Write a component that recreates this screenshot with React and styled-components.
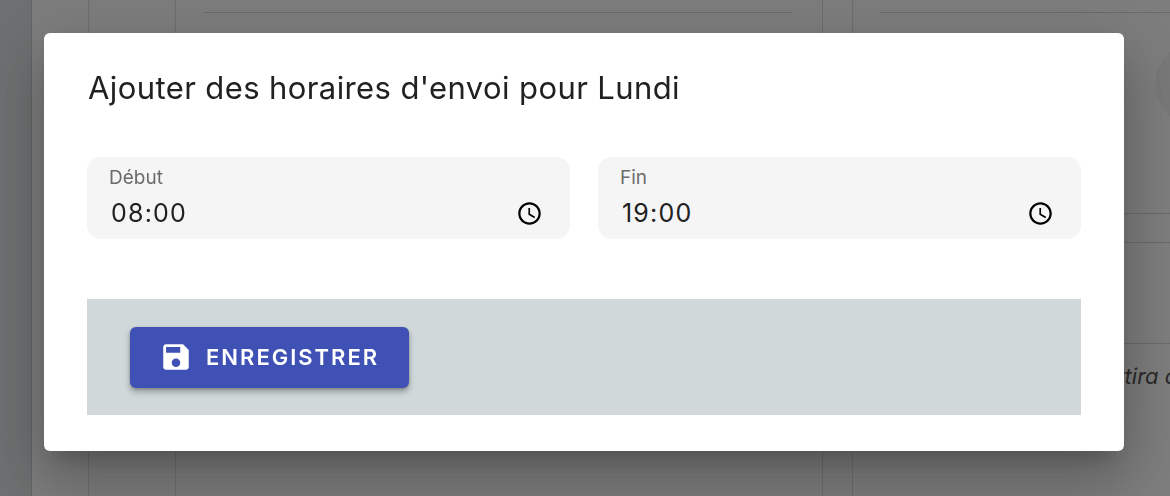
import React from 'react';
import styled, { createGlobalStyle } from 'styled-components';

const GlobalStyle = createGlobalStyle`
  html, body {
    margin: 0;
    padding: 0;
    height: 100%;
    overflow: hidden;
    font-family: Inter, "Liberation Sans", sans-serif;
  }
`;

// page behind the dialog
const Page = styled.div`
  display: flex;
  width: 1170px;
  height: 496px;
  background: #fafafa;
  overflow: hidden;
`;

const Rail = styled.div`
  width: 31px;
  background: #dcdfe1;
  border-right: 1px solid #c8c8c8;
`;

const Column = styled.div`
  width: ${(p) => p.$width}px;
  border-right: 1px solid #dcdcdc;
  flex-shrink: 0;
`;

const MainColumn = styled.div`
  width: 647px;
  flex-shrink: 0;
  padding: 12px 29px 0 28px;
  box-sizing: border-box;
  border-right: 1px solid #dcdcdc;
`;

const Gutter = styled.div`
  width: 29px;
  border-right: 1px solid #dcdcdc;
  flex-shrink: 0;
`;

const SideColumn = styled.div`
  flex: 1;
  min-width: 0;
  padding: 12px 0 0 27px;
  display: flex;
  flex-direction: column;
  overflow: hidden;
`;

const Rule = styled.div`
  height: 1px;
  flex-shrink: 0;
  background: #d4d4d4;
  margin-top: ${(p) => p.$top || 0}px;
`;

const Avatar = styled.div`
  width: 84px;
  height: 84px;
  flex-shrink: 0;
  margin: 29px 0 0 275px;
  border-radius: 50%;
  background: #f1f1f1;
`;

const Note = styled.div`
  margin-top: 18px;
  padding-left: 209px;
  font-size: 22px;
  line-height: 28px;
  font-style: italic;
  color: #555;
  white-space: nowrap;
`;

const Backdrop = styled.div`
  position: fixed;
  inset: 0;
  background: rgba(0, 0, 0, 0.5);
  padding: 33px 0 0 44px;
  box-sizing: border-box;
`;

const Dialog = styled.div`
  width: 1080px;
  height: 418px;
  box-sizing: border-box;
  padding: 38px 43px 36px;
  background: #fff;
  border-radius: 6px;
  box-shadow: 0 15px 21px -10px rgba(0, 0, 0, 0.2),
    0 34px 53px 4px rgba(0, 0, 0, 0.14), 0 13px 64px 11px rgba(0, 0, 0, 0.12);
`;

const Title = styled.h2`
  margin: 0 0 0 1px;
  font-size: 31px;
  line-height: 34px;
  font-weight: 400;
  letter-spacing: 0.4px;
  color: #212121;
`;

const Fields = styled.div`
  display: grid;
  grid-template-columns: 483px 483px;
  gap: 28px;
  margin-top: 52px;
`;

const Field = styled.div`
  height: 82px;
  box-sizing: border-box;
  padding: 10px 27px 0 22px;
  background: #f5f5f5;
  border-radius: 14px;
`;

const Label = styled.div`
  font-size: 19px;
  line-height: 22px;
  color: #6b6b6b;
`;

const ValueRow = styled.div`
  display: flex;
  align-items: center;
  justify-content: space-between;
  margin-top: 4px;
  padding-left: 2px;
`;

const Value = styled.span`
  font-size: 25px;
  line-height: 40px;
  letter-spacing: 1.2px;
  color: #212121;
`;

const Footer = styled.div`
  height: 116px;
  box-sizing: border-box;
  margin-top: 60px;
  padding: 28px 43px;
  background: #d0d8da;
`;

const SaveButton = styled.button`
  display: flex;
  align-items: center;
  gap: 13px;
  width: 279px;
  height: 61px;
  padding: 0 0 1px 29px;
  box-sizing: border-box;
  border: 0;
  border-radius: 6px;
  background: #3f51b5;
  color: #fff;
  font-family: inherit;
  font-size: 22px;
  font-weight: 600;
  letter-spacing: 2px;
  box-shadow: 0 4px 6px rgba(0, 0, 0, 0.28), 0 1px 3px rgba(0, 0, 0, 0.2);
`;

const ClockIcon = () => (
  <svg width="27" height="27" viewBox="0 0 24 24" fill="#000">
    <path d="M11.99 2C6.47 2 2 6.48 2 12s4.47 10 9.99 10C17.52 22 22 17.52 22 12S17.52 2 11.99 2zM12 20c-4.42 0-8-3.58-8-8s3.58-8 8-8 8 3.58 8 8-3.58 8-8 8z" />
    <path d="M12.5 7H11v6l5.25 3.15.75-1.23-4.5-2.67z" />
  </svg>
);

const SaveIcon = () => (
  <svg width="34" height="34" viewBox="0 0 24 24" fill="#fff">
    <path d="M17 3H5c-1.11 0-2 .9-2 2v14c0 1.1.89 2 2 2h14c1.1 0 2-.9 2-2V7l-4-4zm-5 16c-1.66 0-3-1.34-3-3s1.34-3 3-3 3 1.34 3 3-1.34 3-3 3zm3-10H5V5h10v4z" />
  </svg>
);

const TimeField = ({ label, value }) => (
  <Field>
    <Label>{label}</Label>
    <ValueRow>
      <Value>{value}</Value>
      <ClockIcon />
    </ValueRow>
  </Field>
);

export default function App() {
  return (
    <>
      <GlobalStyle />
      <Page>
        <Rail />
        <Column $width={56} />
        <Column $width={86} />
        <MainColumn>
          <Rule />
        </MainColumn>
        <Gutter />
        <SideColumn>
          <Rule />
          <Avatar />
          <Rule $top={87} />
          <Rule $top={28} />
          <Rule $top={100} />
          <Note>partira à</Note>
        </SideColumn>
      </Page>
      <Backdrop>
        <Dialog>
          <Title>Ajouter des horaires d'envoi pour Lundi</Title>
          <Fields>
            <TimeField label="Début" value="08:00" />
            <TimeField label="Fin" value="19:00" />
          </Fields>
          <Footer>
            <SaveButton>
              <SaveIcon />
              ENREGISTRER
            </SaveButton>
          </Footer>
        </Dialog>
      </Backdrop>
    </>
  );
}
